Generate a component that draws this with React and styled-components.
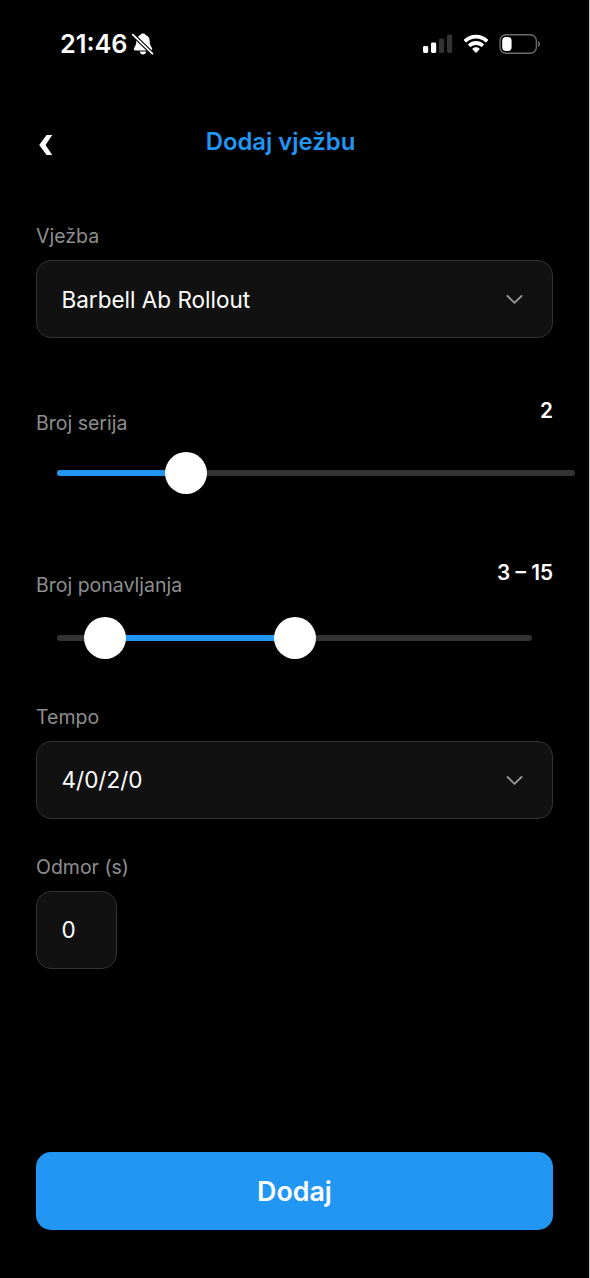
import React from "react";
import styled, { createGlobalStyle } from "styled-components";

function App() {
  return (
    <>
      <GlobalStyle />
      <Screen>
        <StatusBar>
          <Time>21:46</Time>
          <MutedBell />
          <StatusIcons>
            <Signal />
            <Wifi />
            <Battery />
          </StatusIcons>
        </StatusBar>

        <Header>
          <BackButton aria-label="Natrag">
            <svg width="15" height="22" viewBox="0 0 15 22">
              <path d="M8.6 1H14.2L7.6 11L14.2 21H8.6L1.2 11Z" fill="#fff" />
            </svg>
          </BackButton>
          <Title>Dodaj vježbu</Title>
        </Header>

        <Form>
          <Label>Vježba</Label>
          <Field $bottom={61}>
            <span>Barbell Ab Rollout</span>
            <Chevron />
          </Field>

          <SliderHead>
            <Label>Broj serija</Label>
            <Value>2</Value>
          </SliderHead>
          <Slider $width={517.5} $top={16.4} $bottom={65.6}>
            <Fill style={{ left: "0%", width: "25%" }} />
            <Thumb style={{ left: "25%" }} />
          </Slider>

          <SliderHead>
            <Label>Broj ponavljanja</Label>
            <Value>3 – 15</Value>
          </SliderHead>
          <Slider $width={475} $top={19.4} $bottom={44.6}>
            <Fill style={{ left: "10%", width: "40%" }} />
            <Thumb style={{ left: "10%" }} />
            <Thumb style={{ left: "50%" }} />
          </Slider>

          <Label>Tempo</Label>
          <Field $bottom={36}>
            <span>4/0/2/0</span>
            <Chevron />
          </Field>

          <Label>Odmor (s)</Label>
          <Field $width={81} $bottom={0}>
            <span>0</span>
          </Field>

          <SubmitButton>Dodaj</SubmitButton>
        </Form>
      </Screen>
    </>
  );
}

export default App;

function MutedBell() {
  return (
    <svg width="22" height="22" viewBox="0 0 22 22">
      <path
        d="M11 0.6C12.5 0.6 13.3 1.2 13.6 2C16.4 2.8 17.6 5.2 17.7 8C17.8 11.3 18.4 12.8 19.7 14.4C20.7 15.8 20.2 17.4 18.5 17.4H3.5C1.8 17.4 1.3 15.8 2.3 14.4C3.6 12.8 4.2 11.3 4.3 8C4.4 5.2 5.6 2.8 8.4 2C8.7 1.2 9.5 0.6 11 0.6Z"
        fill="#fff"
      />
      <path d="M7.8 18.4H14.2C13.9 20.4 12.7 21.4 11 21.4C9.3 21.4 8.1 20.4 7.8 18.4Z" fill="#fff" />
      <path d="M0.2 1L21 21.2" stroke="#000" strokeWidth="4" />
      <path d="M0.8 1.6L20.4 20.6" stroke="#fff" strokeWidth="1.8" strokeLinecap="round" />
    </svg>
  );
}

function Signal() {
  return (
    <svg width="30" height="20" viewBox="0 0 30 20">
      <rect x="0" y="12" width="5.2" height="7" rx="1.4" fill="#fff" />
      <rect x="8" y="8.4" width="5.2" height="10.6" rx="1.4" fill="#fff" />
      <rect x="16" y="4.4" width="5.2" height="14.6" rx="1.4" fill="#333" />
      <rect x="24" y="0.6" width="5.2" height="18.4" rx="1.4" fill="#333" />
    </svg>
  );
}

function Wifi() {
  return (
    <svg width="26" height="20" viewBox="0 0 26 20">
      <path
        d="M13 0.8C17.6 0.8 21.8 2.5 25 5.5C25.3 5.8 25.3 6.1 25 6.4L23.2 8.2C22.9 8.5 22.6 8.5 22.3 8.2C19.8 5.9 16.5 4.6 13 4.6C9.5 4.6 6.2 5.9 3.7 8.2C3.4 8.5 3.1 8.5 2.8 8.2L1 6.4C0.7 6.1 0.7 5.8 1 5.5C4.2 2.5 8.4 0.8 13 0.8Z"
        fill="#fff"
      />
      <path
        d="M13 7.1C15.9 7.1 18.6 8.2 20.7 10.1C21 10.4 21 10.7 20.7 11L18.9 12.8C18.6 13.1 18.3 13.1 18 12.8C16.6 11.6 14.9 10.9 13 10.9C11.1 10.9 9.4 11.6 8 12.8C7.7 13.1 7.4 13.1 7.1 12.8L5.3 11C5 10.7 5 10.4 5.3 10.1C7.4 8.2 10.1 7.1 13 7.1Z"
        fill="#fff"
      />
      <path
        d="M13 13.3C14.3 13.3 15.5 13.8 16.4 14.6C16.7 14.9 16.7 15.2 16.4 15.5L13.5 18.4C13.2 18.7 12.8 18.7 12.5 18.4L9.6 15.5C9.3 15.2 9.3 14.9 9.6 14.6C10.5 13.8 11.7 13.3 13 13.3Z"
        fill="#fff"
      />
    </svg>
  );
}

function Battery() {
  return (
    <svg width="42" height="20" viewBox="0 0 42 20">
      <rect x="1" y="0.8" width="36.4" height="18.4" rx="6" fill="none" stroke="#6b6b6b" strokeWidth="1.4" />
      <rect x="3.2" y="3" width="9.4" height="14" rx="4" fill="#fff" />
      <path d="M39.2 7C41.8 7.8 41.8 12.2 39.2 13Z" fill="#6b6b6b" />
    </svg>
  );
}

function Chevron() {
  return (
    <svg width="18" height="12" viewBox="0 0 18 12">
      <path
        d="M2.5 3L9.5 9.8L16.5 3"
        fill="none"
        stroke="#999"
        strokeWidth="1.8"
        strokeLinecap="round"
        strokeLinejoin="round"
      />
    </svg>
  );
}

const GlobalStyle = createGlobalStyle`
  * {
    box-sizing: border-box;
  }
  body {
    margin: 0;
    background: #000;
  }
`;

const Screen = styled.div`
  display: flex;
  flex-direction: column;
  width: 590px;
  height: 1278px;
  overflow: hidden;
  background: #000;
  border-right: 1px solid #c8c8c8;
  color: #fff;
  font-family: Inter, "Liberation Sans", sans-serif;
`;

const StatusBar = styled.div`
  display: flex;
  align-items: center;
  height: 88px;
  padding: 0 48px 0 60px;

  svg {
    flex-shrink: 0;
  }
`;

const Time = styled.span`
  width: 72px;
  padding-bottom: 1px;
  font-size: 25.3px;
  font-weight: 600;
  line-height: 30px;
  white-space: nowrap;
`;

const StatusIcons = styled.div`
  display: flex;
  align-items: center;
  gap: 10px;
  margin-left: auto;
`;

const Header = styled.header`
  display: grid;
  grid-template-columns: 60px 1fr 60px;
  align-items: center;
  height: 136px;
  padding: 0 50px 28px 22px;
`;

const BackButton = styled.button`
  display: flex;
  align-items: center;
  height: 44px;
  margin-top: 6px;
  padding: 0 0 0 16px;
  border: none;
  background: none;
  cursor: pointer;
`;

const Title = styled.h1`
  margin: 0;
  text-align: center;
  font-size: 23.9px;
  font-weight: 600;
  line-height: 32px;
  color: #2196f3;
`;

const Form = styled.main`
  flex: 1;
  display: flex;
  flex-direction: column;
  padding: 0 36px 48px;
`;

const Label = styled.label`
  font-size: 19.5px;
  line-height: 24px;
  color: #8e8e8e;
`;

const Field = styled.div`
  display: flex;
  align-items: center;
  justify-content: space-between;
  width: ${(props) => (props.$width ? `${props.$width}px` : "100%")};
  height: 78px;
  margin: 12px 0 ${(props) => props.$bottom}px;
  padding: 0 29px 0 24.5px;
  border: 1px solid #333;
  border-radius: 15px;
  background: #111;
  font-size: 22.5px;
  white-space: nowrap;
`;

const SliderHead = styled.div`
  display: flex;
  justify-content: space-between;
  height: 36px;

  label {
    align-self: flex-end;
  }
`;

const Value = styled.span`
  font-size: 20.8px;
  font-weight: 600;
  line-height: 24px;
`;

const Slider = styled.div`
  position: relative;
  width: ${(props) => props.$width}px;
  height: 6px;
  margin: ${(props) => props.$top + 19}px 0 ${(props) => props.$bottom + 19}px 21px;
  border-radius: 3px;
  background: #333;
`;

const Fill = styled.div`
  position: absolute;
  top: 0;
  height: 6px;
  border-radius: 3px;
  background: #2196f3;
`;

const Thumb = styled.div`
  position: absolute;
  top: 50%;
  width: 42px;
  height: 42px;
  border-radius: 50%;
  background: #fff;
  transform: translate(-50%, -50%);
`;

const SubmitButton = styled.button`
  height: 78px;
  margin-top: auto;
  border: none;
  border-radius: 15px;
  background: #2196f3;
  color: #fff;
  font-family: inherit;
  font-size: 26.8px;
  font-weight: 600;
  cursor: pointer;
`;
